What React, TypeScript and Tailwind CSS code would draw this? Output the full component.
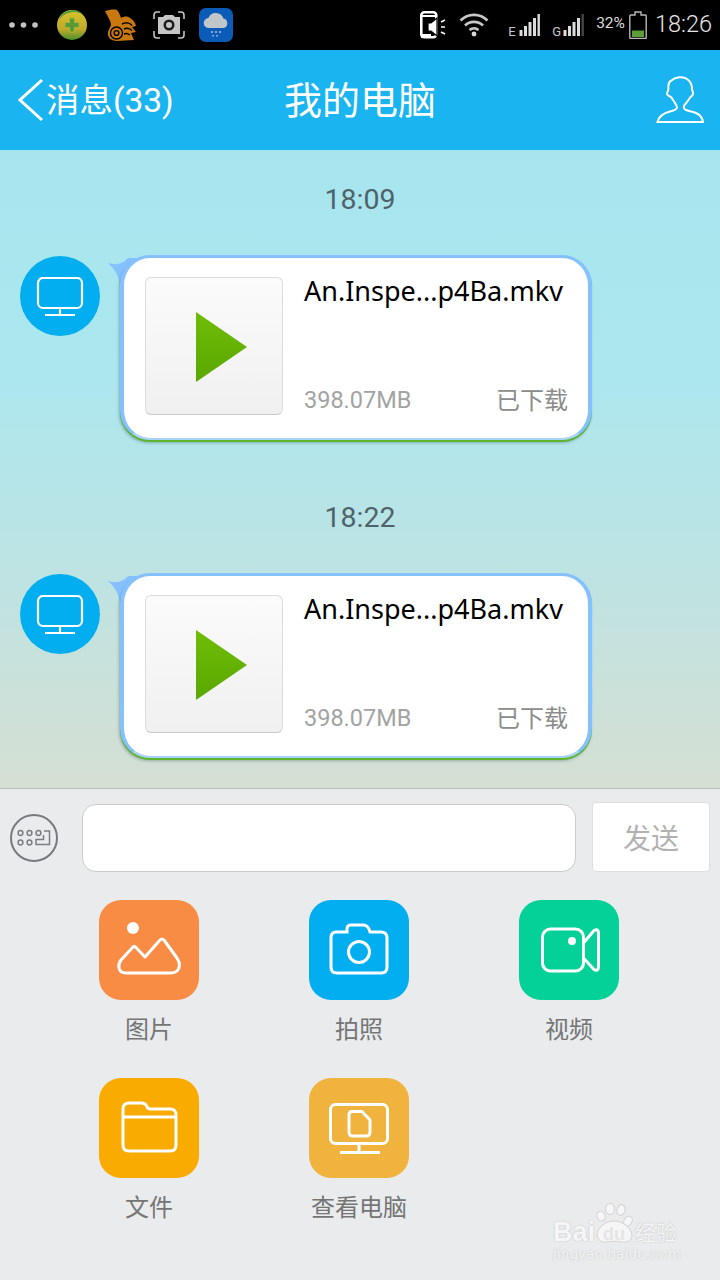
import React from "react";

const FONT = "font-['Roboto','Noto_Sans_CJK_SC',sans-serif]";

function Dots() {
  return (
    <svg width="30" height="6" viewBox="0 0 30 6" className="ml-[9px]">
      <circle cx="3" cy="3" r="2.8" fill="#c4c4c4" />
      <circle cx="14.5" cy="3" r="2.8" fill="#c4c4c4" />
      <circle cx="26" cy="3" r="2.8" fill="#c4c4c4" />
    </svg>
  );
}

function Icon360() {
  return (
    <svg width="30" height="30" viewBox="0 0 30 30" className="ml-[18px]">
      <defs>
        <linearGradient id="g360" x1="0" y1="0" x2="0" y2="1">
          <stop offset="0" stopColor="#d9c42c" />
          <stop offset="0.65" stopColor="#bfa928" />
          <stop offset="1" stopColor="#46912f" />
        </linearGradient>
      </defs>
      <circle cx="15" cy="15" r="15" fill="url(#g360)" />
      <path d="M2 10 A14 14 0 0 1 26 5 A17 17 0 0 0 2 10Z" fill="#4e9a3a" />
      <path d="M12.500 8h5v4.500H22v5h-4.500V22h-5v-4.500H8v-5h4.500z" fill="#5a9a35" stroke="#a9b53a" strokeWidth="1" />
    </svg>
  );
}

function IconUC() {
  return (
    <svg width="32" height="32" viewBox="0 0 32 32" className="ml-[17px]">
      <path
        d="M1 2C5 1 9 0 13 1C15 3 16 6 17 9C20 7 24 7 26 9C29 11 31 13 32 17L28 18L32 23L27 24L30 31L13 32C7 32 3 28 4 23C4.500 20 7 18 7 15C6 11 3 6 1 2Z"
        fill="#c9770f"
      />
      <g fill="none" stroke="#000" strokeWidth="1.4">
        <circle cx="12.500" cy="24" r="6" />
        <circle cx="12.500" cy="24" r="2.400" />
        <path d="M18 15C22 13 26 14 28 16.500M20 20C23 18.500 26 19.500 28 21.500M20 25C22 24 24 24.500 26 26" />
      </g>
    </svg>
  );
}

function IconShot() {
  return (
    <svg width="32" height="28" viewBox="0 0 32 28" className="ml-[17px]">
      <path d="M1 8V4a3 3 0 0 1 3-3h3M25 1h3a3 3 0 0 1 3 3v4M31 20v4a3 3 0 0 1-3 3h-3M7 27H4a3 3 0 0 1-3-3v-4" fill="none" stroke="#c4c4c4" strokeWidth="1.6" />
      <path d="M5 6h5l2-2h8l2 2h5v17H5z" fill="#c6c6c6" />
      <circle cx="16" cy="14" r="5.5" fill="#1b1b1b" />
      <circle cx="16" cy="14" r="3" fill="#c6c6c6" />
    </svg>
  );
}

function IconWeather() {
  return (
    <svg width="34" height="34" viewBox="0 0 34 34" className="ml-[14px]">
      <rect width="34" height="34" rx="7" fill="#0a5cb8" />
      <path d="M10 20a5 5 0 0 1-.6-10 8 8 0 0 1 15 .6A4.8 4.8 0 0 1 24.5 20z" fill="#c0c6ca" />
      <path d="M13 23v2M17 23v2M21 23v2M14 27v1.5M18 27v1.5" stroke="#d8dde0" strokeWidth="1.2" />
    </svg>
  );
}

function IconPhoneSound() {
  return (
    <svg width="26" height="28" viewBox="0 0 26 28">
      <rect x="1.3" y="1.3" width="15" height="25" rx="3" fill="none" stroke="#fff" strokeWidth="2.6" />
      <path d="M1 4h16v2H1zM1 23h10v4H1z" fill="#fff" />
      <path d="M8 12h3l6-5v18l-6-5H8z" fill="#fff" stroke="#000" strokeWidth="1.2" />
      <path d="M21 11l4-2M21 16h4M21 21l4 2" stroke="#fff" strokeWidth="1.6" />
    </svg>
  );
}

function IconWifi() {
  return (
    <svg width="30" height="24" viewBox="0 0 30 24" className="ml-[13px]">
      <g fill="none" stroke="#c8c8c8" strokeWidth="2.6">
        <path d="M1.5 7.5a19 19 0 0 1 27 0" />
        <path d="M6 12.5a13 13 0 0 1 18 0" />
        <path d="M10.5 17a7 7 0 0 1 9 0" />
      </g>
      <circle cx="15" cy="21" r="2.4" fill="#d8d8d8" />
    </svg>
  );
}

function Signal({ letter, last }: { letter: string; last?: boolean }) {
  return (
    <div className="w-[33px] h-[24px] flex items-end">
      <span className="w-[11px] text-[13px] leading-[10px] text-[#c8c8c8]">{letter}</span>
      <svg width="22" height="24" viewBox="0 0 22 24">
        <rect x="0.500" y="17" width="3" height="6" fill="#ddd" />
        <rect x="5" y="13" width="3" height="10" fill="#ddd" />
        <rect x="9.500" y="9" width="3" height="14" fill="#ddd" />
        <rect x="14" y="5" width="3" height="18" fill="#ddd" />
        <rect x="18.500" y="1" width="2.400" height="22" fill={last ? "#444" : "#ddd"} />
      </svg>
    </div>
  );
}

function IconBattery() {
  return (
    <svg width="18" height="28" viewBox="0 0 18 28" className="ml-[4px]">
      <path d="M6 1h6v3h4.2a1 1 0 0 1 1 1v21.5a1 1 0 0 1-1 1H1.8a1 1 0 0 1-1-1V5a1 1 0 0 1 1-1H6z" fill="none" stroke="#b8b8b8" strokeWidth="1.4" />
      <rect x="3" y="19.5" width="12" height="6.5" fill="#5b9e33" />
    </svg>
  );
}

function StatusBar() {
  return (
    <div className="h-[50px] bg-black flex items-center">
      <Dots />
      <Icon360 />
      <IconUC />
      <IconShot />
      <IconWeather />
      <div className="ml-auto flex items-center">
        <IconPhoneSound />
        <IconWifi />
        <div className="ml-[19px] flex items-center gap-[11px]">
          <Signal letter="E" />
          <Signal letter="G" last />
        </div>
        <span className="ml-[11px] text-[15.500px] text-[#dddddd] leading-none -mt-[2px]">32%</span>
        <IconBattery />
        <span className="ml-[8px] mr-[8px] text-[23.500px] font-light text-[#e4e4e4] leading-none">18:26</span>
      </div>
    </div>
  );
}

function Header() {
  return (
    <div className="h-[100px] bg-[#1ab5f0] grid grid-cols-[1fr_auto_1fr] items-center text-white">
      <div className="flex items-center pl-[18px]">
        <svg width="26" height="44" viewBox="0 0 26 44">
          <path d="M24 2 L2 22 L24 42" fill="none" stroke="#fff" strokeWidth="3" />
        </svg>
        <span className="ml-[2px] mt-[1px] text-[33.500px] leading-none whitespace-nowrap">消息(33)</span>
      </div>
      <span className="mt-[1px] text-[38px] leading-none">我的电脑</span>
      <div className="flex justify-end pr-[16px]">
        <svg width="48" height="48" viewBox="0 0 48 48">
          <path
            d="M1.500 46C3 40 8 37 14 35.500C18 34.500 21 33.500 21 31.500C21 29 19 27 17 24C16 22 15.500 21 14 20.500C11 19.500 10.500 17.500 11.500 16C13 14 12 12 12.500 9C13 6 14 5 15.500 4.500C19 1 27 0 31 3C35 5.500 36 9 36 13C36 15 37.500 16 37 18C36.500 20 35 20.500 34 21.500C33 24 30 27 28.500 29C27.500 31 27.500 33 30 34C34 35.500 38 36 41 37.500C45 39.500 46.500 43 47 46Z"
            fill="none"
            stroke="#fff"
            strokeWidth="2"
          />
        </svg>
      </div>
    </div>
  );
}

function Bubble() {
  return (
    <div className="flex pl-[20px] items-start">
      <div className="mt-[1px] w-[80px] h-[80px] rounded-full bg-[#02aef0] flex items-center justify-center shrink-0">
        <svg width="48" height="40" viewBox="0 0 48 40" className="mt-[2px]">
          <rect x="2" y="1" width="44" height="30" rx="5" fill="none" stroke="#fff" strokeWidth="2.2" />
          <path d="M24 31v6M9 38h30" stroke="#fff" strokeWidth="2.2" />
        </svg>
      </div>
      <div className="relative ml-[20px] w-[472px] h-[185px] rounded-[30px] bg-white border-x-[4px] border-t-[3px] border-b-[2px] border-x-[#86c1ff] border-t-[#86c1ff] border-b-[#a8d4fb] shadow-[0_2px_0_#5db52c,-1px_3px_3px_rgba(40,70,70,0.35)] flex pl-[21px] pt-[19px] pr-[20px]">
        <svg width="32" height="32" viewBox="0 0 32 32" className="absolute left-[-16px] top-[0px] -z-10">
          <path d="M0 5C6 7 14 7 20 0L32 0L32 32L12 32C12 20 8 12 0 5Z" fill="#86c1ff" />
        </svg>
        <div className="w-[138px] h-[138px] shrink-0 rounded-[6px] border border-[#dcdcdc] border-b-[#c9c9c9] bg-gradient-to-b from-[#fbfbfb] to-[#f0f0f0] flex items-center justify-center">
          <svg width="51" height="70" viewBox="0 0 51 70" className="ml-[15px] mt-[2px]">
            <defs>
              <linearGradient id="gPlay" x1="0" y1="0" x2="0" y2="1">
                <stop offset="0" stopColor="#70bd06" />
                <stop offset="1" stopColor="#59a701" />
              </linearGradient>
            </defs>
            <path d="M0 0 L51 35 L0 70Z" fill="url(#gPlay)" />
          </svg>
        </div>
        <div className="ml-[21px] flex-1 flex flex-col justify-between h-[139px]">
          <div className="-mt-[1px] text-[27px] leading-[30px] text-black font-['Noto_Sans',sans-serif] whitespace-nowrap">An.Inspe...p4Ba.mkv</div>
          <div className="flex justify-between items-center h-[30px]">
            <span className="text-[23.500px] text-[#a3a3a3] leading-none">398.07MB</span>
            <span className="text-[24px] text-[#8c8c8c] leading-none">已下载</span>
          </div>
        </div>
      </div>
    </div>
  );
}

function TimeRow({ t }: { t: string }) {
  return <div className="flex items-center justify-center h-[100px] pt-[1px] text-[28.500px] text-[#4f6269] leading-none">{t}</div>;
}

function Chat() {
  return (
    <div className="isolate h-[639px] border-b border-b-[#b9c0b9] bg-[linear-gradient(to_bottom,#a7e5ee_0%,#ace7ee_35%,#b8e4e6_58%,#d5dfd3_100%)]">
      <TimeRow t="18:09" />
      <div className="h-[5px]" />
      <Bubble />
      <div className="h-[28px]" />
      <TimeRow t="18:22" />
      <div className="h-[5px]" />
      <Bubble />
    </div>
  );
}

function InputBar() {
  return (
    <div className="flex items-start pt-[13px] pl-[10px]">
      <div className="mt-[12px] w-[48px] h-[48px] rounded-full border-2 border-[#777b7e] flex items-center justify-center shrink-0">
        <svg width="34" height="18" viewBox="0 0 34 18">
          <g fill="none" stroke="#7b7f82" strokeWidth="1.5">
            <circle cx="3.500" cy="4" r="2.400" />
            <circle cx="12.500" cy="4" r="2.400" />
            <circle cx="21.500" cy="4" r="2.400" />
            <circle cx="3.500" cy="13.500" r="2.400" />
            <circle cx="12.500" cy="13.500" r="2.400" />
            <path d="M27 2h5.500v13.500H19v-5h7.500V6" />
          </g>
        </svg>
      </div>
      <div className="mt-[2px] ml-[24px] w-[494px] h-[68px] rounded-[14px] bg-white border border-[#cbcbcb]" />
      <div className="ml-[16px] w-[118px] h-[70px] rounded-[4px] bg-white border border-[#dfdfdf] flex items-center justify-center pt-[5px] text-[28px] text-[#b2b2b2] leading-none">
        发送
      </div>
    </div>
  );
}

function Tile({ bg, label, children }: { bg: string; label: string; children: React.ReactNode }) {
  return (
    <div className="w-[100px] flex flex-col items-center">
      <div className={`w-[100px] h-[100px] rounded-[22px] ${bg}`}>{children}</div>
      <div className="mt-[14px] h-[32px] flex items-center justify-center whitespace-nowrap text-[24px] leading-none text-[#757575]">{label}</div>
    </div>
  );
}

function Svg({ children }: { children: React.ReactNode }) {
  return (
    <svg width="100" height="100" viewBox="0 0 100 100" fill="none" stroke="#fff" strokeWidth="3">
      {children}
    </svg>
  );
}

function Panel() {
  return (
    <div className="grid grid-cols-[100px_100px_100px] gap-x-[110px] gap-y-[32px] pl-[99px] pt-[28px]">
      <Tile bg="bg-[#f98c45]" label="图片">
        <Svg>
          <circle cx="34" cy="28" r="6" fill="#fff" stroke="none" />
          <path d="M36 46.500 L46 57 L61 40 Q63 38 65 40 L78 58 Q83 66 78 71 Q76 73 72 73 L27 73 Q21 73 20 68 Q19 64 22 60 L34 47 Q35 46 36 46.500Z" strokeLinejoin="round" />
        </Svg>
      </Tile>
      <Tile bg="bg-[#02aef0]" label="拍照">
        <Svg>
          <path d="M27 32 H38 V29 Q38 25 42 25 H54 Q58 25 60 29 L61 32 H72 Q78 32 78 38 V67 Q78 73 72 73 H28 Q22 73 22 67 V38 Q22 32 27 32Z" />
          <circle cx="50" cy="52" r="10.500" />
        </Svg>
      </Tile>
      <Tile bg="bg-[#03d198]" label="视频">
        <Svg>
          <rect x="23.500" y="29" width="41" height="42" rx="8" />
          <path d="M64.500 43 L75 30.500 Q79 28 79.500 33 V67 Q79 72 75 69.500 L64.500 58" strokeLinejoin="round" />
          <circle cx="53" cy="41" r="4" fill="#fff" stroke="none" />
        </Svg>
      </Tile>
      <Tile bg="bg-[#f9ab02]" label="文件">
        <Svg>
          <path d="M24 31 Q24 25 30 25 H42 Q47 25 48 29 Q49 31 52 31 H71 Q77 31 77 37 V67 Q77 73 71 73 H30 Q24 73 24 67Z" />
          <path d="M24 39 H77" />
        </Svg>
      </Tile>
      <Tile bg="bg-[#efb33e]" label="查看电脑">
        <Svg>
          <rect x="21.500" y="26.500" width="57" height="39" rx="5" />
          <path d="M50 66 V74 M31 74.500 H71" />
          <path d="M43 33.500 H53 L61 42 V54 Q61 58 57 58 H44 Q40 58 40 54 V37 Q40 33.500 43 33.500Z" strokeLinejoin="round" />
        </Svg>
      </Tile>
    </div>
  );
}

function Watermark() {
  return (
    <div className="absolute left-[552px] top-[1202px] w-[132px] h-[70px] text-[#f6f6f6] [text-shadow:0_0_1.5px_#b5b5b5]">
      <svg width="38" height="42" viewBox="0 0 38 42" className="absolute left-[44px] top-[1px]">
        <g fill="#f6f6f6" stroke="#d2d2d2" strokeWidth="1">
          <ellipse cx="5" cy="13" rx="4" ry="5" transform="rotate(-25 5 13)" />
          <ellipse cx="14" cy="6" rx="4.500" ry="5.500" />
          <ellipse cx="25" cy="7" rx="4" ry="5.500" transform="rotate(15 25 7)" />
          <ellipse cx="32" cy="18" rx="4" ry="5" transform="rotate(30 32 18)" />
          <path d="M1 31 C2 24 10 18 18 18 C26 18 35 24 36 32 C36 38 30 40 26 39 C22 38 15 38 11 39 C6 40 1 37 1 31Z" />
        </g>
      </svg>
      <span className="absolute left-[1px] top-[17px] text-[27px] font-bold leading-none font-['Liberation_Sans',sans-serif]">Bai</span>
      <span className="absolute left-[51px] top-[23px] text-[18px] font-bold leading-none text-[#e4e4e4] [text-shadow:none] font-['Liberation_Sans',sans-serif]">du</span>
      <span className="absolute left-[83px] top-[21px] text-[21px] whitespace-nowrap leading-none">经验</span>
      <span className="absolute left-[1px] top-[46px] text-[14.500px] leading-none tracking-[0.6px] whitespace-nowrap">jingyan.baidu.com</span>
    </div>
  );
}

export default function App() {
  return (
    <div className={`relative w-[720px] h-[1280px] overflow-hidden bg-[#e9ebed] ${FONT}`}>
      <StatusBar />
      <Header />
      <Chat />
      <InputBar />
      <Panel />
      <Watermark />
    </div>
  );
}
